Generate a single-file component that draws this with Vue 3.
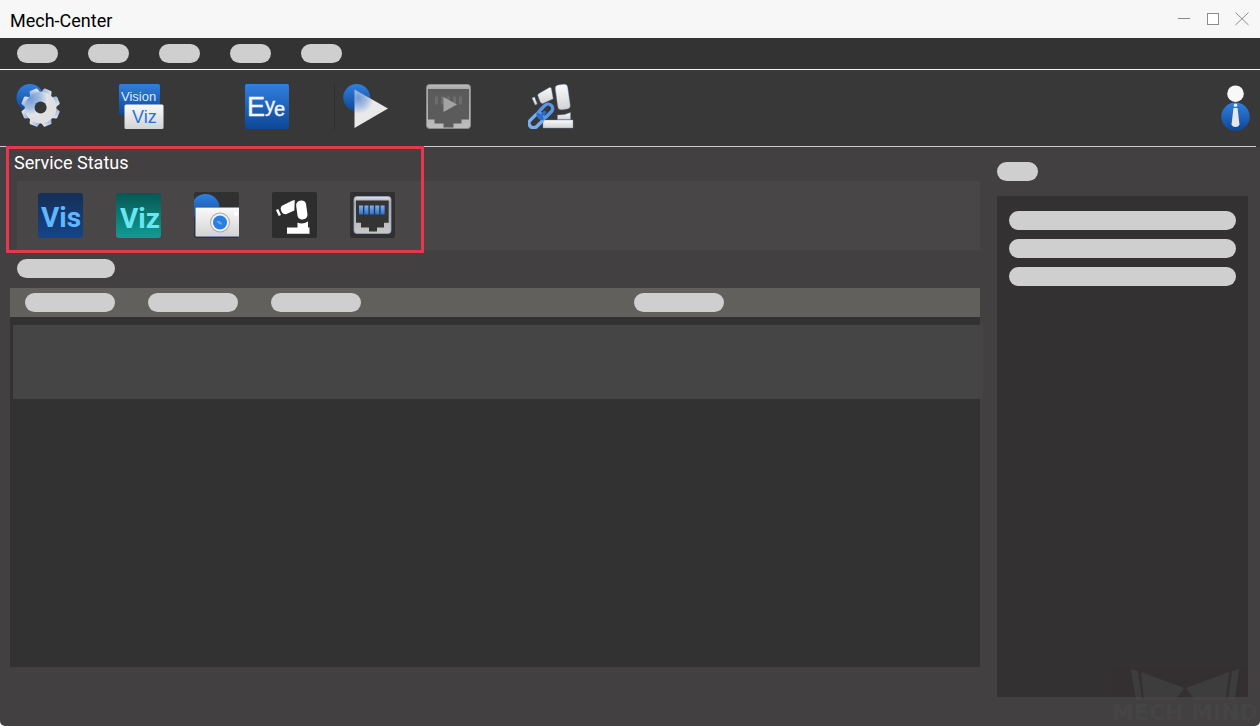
<script setup>
const menus = ['File', 'Edit', 'View', 'Tools', 'Help']
const teeth = [0, 1, 2, 3, 4, 5, 6, 7].map((n) => n * 45 + 22.5)
const pins = [0, 1, 2, 3, 4]
const logs = [1, 2, 3]
</script>

<template>
  <div class="window">
    <svg class="defs" width="0" height="0" aria-hidden="true">
      <defs>
        <linearGradient id="blue" x1="0" y1="0" x2="0" y2="1">
          <stop offset="0" stop-color="#317fdf" />
          <stop offset="1" stop-color="#0e4796" />
        </linearGradient>
        <linearGradient id="white" x1="0" y1="0" x2="0" y2="1">
          <stop offset="0" stop-color="#fafafa" />
          <stop offset="1" stop-color="#d3d3d5" />
        </linearGradient>
        <radialGradient id="gear" gradientUnits="userSpaceOnUse" cx="14" cy="15" r="20">
          <stop offset="0" stop-color="#6f9ad6" />
          <stop offset="0.5" stop-color="#a3bce0" />
          <stop offset="0.85" stop-color="#e2e4e9" />
          <stop offset="1" stop-color="#e0e0e2" />
        </radialGradient>
        <radialGradient id="play" gradientUnits="userSpaceOnUse" cx="15" cy="15" r="16">
          <stop offset="0" stop-color="#6f9ad6" />
          <stop offset="0.55" stop-color="#a9bfde" />
          <stop offset="1" stop-color="#e9e9ea" />
        </radialGradient>
        <linearGradient id="vis" x1="0" y1="0" x2="0" y2="1">
          <stop offset="0" stop-color="#152f57" />
          <stop offset="1" stop-color="#154486" />
        </linearGradient>
        <linearGradient id="viz" x1="0" y1="0" x2="0" y2="1">
          <stop offset="0" stop-color="#075653" />
          <stop offset="1" stop-color="#119c94" />
        </linearGradient>
        <linearGradient id="pin" x1="0" y1="0" x2="0" y2="1">
          <stop offset="0" stop-color="#7bb2f8" />
          <stop offset="1" stop-color="#2c70cf" />
        </linearGradient>
        <linearGradient id="metal" x1="0" y1="0" x2="0" y2="1">
          <stop offset="0" stop-color="#e8e6e6" />
          <stop offset="0.15" stop-color="#aaa8a8" />
          <stop offset="1" stop-color="#c9c7c7" />
        </linearGradient>
        <linearGradient id="dull" x1="0" y1="0" x2="0" y2="1">
          <stop offset="0" stop-color="#bcbcbc" />
          <stop offset="0.12" stop-color="#a6a6a6" />
          <stop offset="1" stop-color="#bdbdbd" />
        </linearGradient>
        <clipPath id="tile"><rect width="45" height="46" rx="2" /></clipPath>
      </defs>
    </svg>

    <header class="titlebar">
      <h1>Mech-Center</h1>
      <div class="controls">
        <button aria-label="Minimize">
          <svg width="14" height="14"><path d="M1 6.5h12" stroke="#8f898a" /></svg>
        </button>
        <button aria-label="Maximize">
          <svg width="14" height="14"><rect x="1.5" y="1.5" width="11" height="11" fill="#fff" stroke="#8f898a" /></svg>
        </button>
        <button aria-label="Close">
          <svg width="14" height="14"><path d="M.5 .5l13 12.500M13.500 .5l-13 12.500" stroke="#8f898a" /></svg>
        </button>
      </div>
    </header>

    <nav class="menubar">
      <button v-for="m in menus" :key="m" class="pill" :aria-label="m"></button>
    </nav>

    <div class="toolbar">
      <div class="tools">
        <button aria-label="Deployment settings">
          <svg width="46" height="46">
            <circle cx="14" cy="14.500" r="13.500" fill="url(#blue)" />
            <g fill="url(#gear)">
              <path
                v-for="a in teeth"
                :key="a"
                d="M19 11L20.300 6.300Q20.600 5.300 21.500 5.300H27.700Q28.600 5.300 28.900 6.300L30.200 11Z"
                :transform="`rotate(${a} 24.600 24.600)`"
              />
              <circle cx="24.600" cy="24.600" r="15.800" />
            </g>
            <circle cx="24.600" cy="24.600" r="6" fill="#353739" />
          </svg>
        </button>
        <button aria-label="Vision and Viz">
          <svg width="46" height="47">
            <rect x="1" y="1" width="41" height="31" rx="2" fill="url(#blue)" />
            <text x="3" y="18" class="sans" font-size="13" fill="#dcebff">Vision</text>
            <rect x="6.500" y="21.500" width="39" height="24.500" rx="1.500" fill="url(#white)" />
            <text x="14" y="40" class="sans" font-size="18" fill="#2873d2">Viz</text>
          </svg>
        </button>
        <button class="eye" aria-label="Eye">
          <svg width="46" height="47">
            <rect x="1" y="1" width="44" height="45" rx="2" fill="url(#blue)" />
            <g class="sans" fill="#f4f7fc" stroke="#f4f7fc" stroke-width=".4">
              <text x="3" y="33" font-size="27">E</text>
              <text x="21" y="29" font-size="20">y</text>
              <text x="30" y="33" font-size="20">e</text>
            </g>
          </svg>
        </button>
        <button aria-label="Run">
          <svg width="46" height="46">
            <circle cx="13.700" cy="14.500" r="13.500" fill="url(#blue)" />
            <path d="M11.500 6.500L45 25.500L11.500 45Z" fill="url(#play)" />
          </svg>
        </button>
        <button aria-label="Start interface" disabled>
          <svg width="46" height="47">
            <rect x="1.500" y="1.500" width="44" height="44" rx="3" fill="url(#dull)" stroke="#8c8c8c" />
            <path d="M3 6H44V36.500H36.500V40.500H28.500V44.500H18.500V40.500H9.500V36.500H3Z" fill="#5b5b5b" />
            <g fill="#6c6c6c">
              <rect v-for="p in pins" :key="p" :x="10 + p * 6" y="13.500" width="3" height="8" />
            </g>
            <path d="M18.500 14L32 21.500L18.500 29Z" fill="#a3a3a3" />
          </svg>
        </button>
        <button aria-label="Connect robot">
          <svg width="46" height="46">
            <g fill="url(#white)" stroke="#6d8fc0" stroke-width=".4" stroke-linejoin="round">
              <rect x="15" y="37" width="30" height="8" />
              <path d="M29.500 32Q36 32.500 42.500 29.500V36.500H29.500Z" />
              <rect x="28.500" y="1.500" width="12.500" height="25" rx="3.500" transform="rotate(-8 34.700 14)" />
              <path d="M9.800 12.500Q9.500 11.300 11 10.500L21.500 4.500Q23 4 23.300 5.500L25.200 15.800L14.800 20.500Q13 20.700 12 18.500Z" />
              <path d="M4 15L6.500 14L9.300 21L7.200 22Z" />
            </g>
            <g fill="none" stroke-width="3.400">
              <rect x="0" y="33.200" width="16.500" height="9" rx="4.500" stroke="#76aef5" transform="rotate(-45 8.200 37.700)" />
              <rect x="9.200" y="23.700" width="16.500" height="9" rx="4.500" stroke="#5796e9" transform="rotate(-45 17.500 28.200)" />
              <path d="M10 31.500L14 35.500M11.500 34.500L16.500 29.500" stroke="#2b6fc9" stroke-linecap="round" />
            </g>
          </svg>
        </button>
      </div>
      <button class="user" aria-label="User">
        <svg width="31" height="49">
          <circle cx="15.500" cy="33.700" r="14.200" fill="url(#blue)" />
          <circle cx="15.500" cy="10.700" r="8.300" fill="#f8f8f8" />
          <circle cx="15.500" cy="22.300" r="1.800" fill="#e8edf5" />
          <path d="M13.500 25H17.500L19.500 41.500Q18.500 44 15.500 44Q12.500 44 11.500 41.500Z" fill="#e5e7eb" />
        </svg>
      </button>
    </div>

    <main class="body">
      <div class="primary">
        <section class="service">
          <h2>Service Status</h2>
          <div class="status">
            <svg width="45" height="46" role="img" aria-label="Vision status">
              <rect y="1" width="45" height="45" rx="3" fill="url(#vis)" />
              <text x="3" y="34.500" class="mark" fill="#5fb8ff">Vis</text>
            </svg>
            <svg width="45" height="46" role="img" aria-label="Viz status">
              <rect y="1" width="45" height="45" rx="3" fill="url(#viz)" />
              <text x="4" y="35.500" class="mark" fill="#68e6f2">Viz</text>
            </svg>
            <svg width="45" height="46" role="img" aria-label="Camera status">
              <g clip-path="url(#tile)">
                <rect width="45" height="46" fill="#313131" />
                <circle cx="11.500" cy="16" r="14" fill="url(#blue)" />
                <rect x="1.500" y="15.500" width="46" height="29" rx="1" fill="url(#white)" stroke="#7792b8" stroke-width=".7" />
                <circle cx="42" cy="22" r="2" fill="#fff" />
                <circle cx="26" cy="30.500" r="10" fill="#aaa" />
                <circle cx="26" cy="30.500" r="9" fill="#f3f3f3" />
                <circle cx="26" cy="30.500" r="7" fill="#2b7ce5" />
                <path d="M22.500 29Q26.500 28 28.500 32.500Q24.500 33 22.500 29Z" fill="#62a8d2" />
              </g>
            </svg>
            <svg width="45" height="46" role="img" aria-label="Robot status">
              <rect width="45" height="46" rx="2" fill="#2d2d2d" />
              <g fill="#fff">
                <path d="M15 35.500H25.500V30.500Q30.500 33 36 29.500V35.500H37.500V41.700H15Z" />
                <rect x="24.800" y="8.500" width="10" height="19" rx="4.500" transform="rotate(-8 29.700 18)" />
                <path d="M8.700 16.500Q8.500 14.700 10.500 13.500L20 8.700L22.800 8L22.300 18.500L14.500 22Q9.500 23 8.700 16.500Z" />
                <path d="M4 18L6.200 17L9 23L6.700 24Z" />
              </g>
            </svg>
            <svg width="45" height="46" role="img" aria-label="Interface status">
              <rect width="45" height="46" rx="2" fill="#303030" />
              <rect x="4" y="4.500" width="37" height="37" rx="3" fill="url(#metal)" stroke="#8fa6c8" stroke-width=".8" />
              <path d="M6 8.500H38.700V30.700H34V35.500H27V39.500H19V35.500H11V30.700H6Z" fill="#343434" />
              <g fill="url(#pin)">
                <rect v-for="p in pins" :key="p" :x="9 + p * 5.4" y="13.500" width="4" height="9" />
              </g>
            </svg>
          </div>
          <div class="highlight" aria-hidden="true"></div>
        </section>

        <div class="pill heading"></div>
        <section class="records">
          <div class="columns">
            <span class="pill"></span>
            <span class="pill"></span>
            <span class="pill"></span>
            <span class="pill"></span>
          </div>
          <div class="record"></div>
        </section>
      </div>

      <aside class="side">
        <div class="pill"></div>
        <div class="log">
          <div v-for="l in logs" :key="l" class="pill"></div>
        </div>
      </aside>
    </main>

    <div class="watermark">
      <svg width="146" height="32" aria-hidden="true">
        <path
          fill="currentColor"
          d="M18.700 .7L26 3.300L30 32H24ZM29 4L72.300 20L63 32H32ZM74 20L117.300 4L113.300 32H83ZM127.300 .7L120 3.300L116 32H122.700Z"
        />
      </svg>
      <span>MECH MIND</span>
    </div>
  </div>
</template>

<style>
body {
  margin: 0;
  background: #fff;
}
</style>

<style scoped>
.window {
  position: relative;
  display: flex;
  flex-direction: column;
  min-height: 100vh;
  overflow: hidden;
  border-radius: 0 0 5px 5px;
  background: #434041;
  font-family: Roboto, "Liberation Sans", sans-serif;
}
.defs {
  position: absolute;
}
svg {
  display: block;
}
button {
  padding: 0;
  border: 0;
  background: none;
}
h1,
h2 {
  margin: 0;
  font-size: 18px;
  font-weight: 400;
  line-height: 22px;
}
.sans {
  font-family: "Liberation Sans", sans-serif;
}
.mark {
  font-size: 28px;
  font-weight: 700;
}
.pill {
  flex: none;
  width: 41px;
  height: 19px;
  border-radius: 10px;
  background: #cfcfcf;
}
.titlebar {
  display: flex;
  align-items: center;
  justify-content: space-between;
  height: 38px;
  padding: 0 11px 0 10px;
  background: #f7f7f7;
  color: #000;
}
.titlebar h1 {
  padding-top: 4px;
}
.controls {
  display: flex;
  gap: 15px;
}
.menubar {
  display: flex;
  align-items: center;
  gap: 30px;
  height: 31px;
  padding-left: 17px;
  border-bottom: 1px solid #f2f2f2;
  background: #333;
}
.toolbar {
  display: flex;
  justify-content: space-between;
  height: 63px;
  padding: 13px 9px 1px 16px;
  background: linear-gradient(#cdc6cb, #cdc6cb) left bottom / calc(100% - 4px) 1px no-repeat #383838;
}
.tools {
  display: grid;
  grid-template-columns: 102px 126px 99px 82px 103px 46px;
  align-items: start;
}
.tools button {
  width: 46px;
}
.tools .eye {
  width: 91px;
  border-right: 1px solid #303030;
}
.user {
  align-self: start;
}
.body {
  display: grid;
  flex: 1;
  grid-template-columns: minmax(0, 1fr) 251px;
  gap: 17px;
  padding: 0 12px 29px 10px;
}
.primary {
  display: flex;
  flex-direction: column;
  padding-bottom: 30px;
}
.service {
  position: relative;
  padding: 5px 0 0 7px;
}
.service h2 {
  margin-left: -3px;
  color: #fff;
}
.status {
  display: grid;
  grid-template-columns: repeat(5, 78px);
  height: 58px;
  margin-top: 7px;
  padding: 11px 0 0 21px;
  background: #484646;
}
.highlight {
  position: absolute;
  top: -1px;
  left: -4px;
  box-sizing: border-box;
  width: 418px;
  height: 107px;
  border: 3px solid #e8364f;
}
.heading {
  width: 98px;
  margin: 9px 0 10px 7px;
}
.records {
  flex: 1;
  background: #323232;
}
.columns {
  display: grid;
  grid-template-columns: 123px 123px 363px 90px;
  align-items: center;
  height: 29px;
  padding-left: 15px;
  background: #61605d;
}
.columns .pill {
  width: 90px;
}
.record {
  height: 74px;
  margin: 8px -3px 0 3px;
  background: #454545;
}
.side {
  display: flex;
  flex-direction: column;
  gap: 15px;
  padding-top: 15px;
}
.log {
  display: flex;
  flex: 1;
  flex-direction: column;
  gap: 9px;
  padding: 15px 12px;
  background: #343132;
}
.log .pill {
  width: auto;
}
.watermark {
  position: absolute;
  right: 2px;
  bottom: 0;
  width: 146px;
  color: #474a49;
  opacity: 0.5;
}
.watermark span {
  display: block;
  font-family: "DejaVu Sans", sans-serif;
  font-size: 22px;
  font-weight: 700;
  line-height: 26px;
  white-space: nowrap;
}
</style>
